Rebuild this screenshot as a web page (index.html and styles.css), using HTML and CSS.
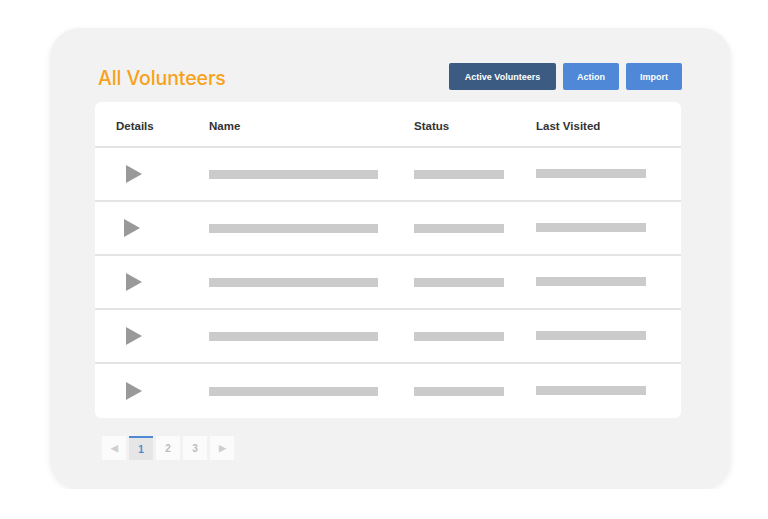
FILE: index.html
```html
<!DOCTYPE html>
<html>
<head>
<meta charset="utf-8">
<link rel="stylesheet" href="styles.css">
</head>
<body>
<div class="card">
  <div class="top">
    <h1 class="title">All Volunteers</h1>
    <div class="buttons">
      <button class="btn btn-dark">Active Volunteers</button>
      <button class="btn btn-blue">Action</button>
      <button class="btn btn-blue">Import</button>
    </div>
  </div>
  <div class="panel">
    <div class="row head">
      <div>Details</div>
      <div>Name</div>
      <div>Status</div>
      <div>Last Visited</div>
    </div>
    <div class="row"><div><span class="tri"></span></div><div><span class="bar bar-name"></span></div><div><span class="bar bar-status"></span></div><div><span class="bar bar-last"></span></div></div>
    <div class="row"><div><span class="tri tri-alt"></span></div><div><span class="bar bar-name"></span></div><div><span class="bar bar-status"></span></div><div><span class="bar bar-last"></span></div></div>
    <div class="row"><div><span class="tri"></span></div><div><span class="bar bar-name"></span></div><div><span class="bar bar-status"></span></div><div><span class="bar bar-last"></span></div></div>
    <div class="row"><div><span class="tri"></span></div><div><span class="bar bar-name"></span></div><div><span class="bar bar-status"></span></div><div><span class="bar bar-last"></span></div></div>
    <div class="row"><div><span class="tri"></span></div><div><span class="bar bar-name"></span></div><div><span class="bar bar-status"></span></div><div><span class="bar bar-last"></span></div></div>
  </div>
  <div class="pager">
    <span class="pg arrow">&#9664;</span>
    <span class="pg active">1</span>
    <span class="pg">2</span>
    <span class="pg">3</span>
    <span class="pg arrow">&#9654;</span>
  </div>
</div>
</body>
</html>
```

FILE: styles.css
```css
html, body {
  margin: 0;
  padding: 0;
  background: #ffffff;
  font-family: "Liberation Sans", Arial, sans-serif;
}

.card {
  box-sizing: border-box;
  width: 681px;
  height: 461px;
  margin: 28px 0 0 50px;
  padding: 35px 0 0 45px;
  background: #f2f2f2;
  border-radius: 30px;
  box-shadow: 0 2px 6px rgba(0, 0, 0, 0.08);
}

.top {
  display: flex;
  align-items: center;
  justify-content: space-between;
  width: 587px;
  height: 27px;
}

.title {
  margin: 2px 0 0 3px;
  font-family: Inter, "Liberation Sans", sans-serif;
  font-size: 19.5px;
  font-weight: 500;
  color: #f7a21b;
  letter-spacing: -0.1px;
}

.buttons {
  display: flex;
  gap: 7px;
}

.btn {
  height: 27px;
  border: none;
  border-radius: 2px;
  color: #ffffff;
  font-family: "Liberation Sans", Arial, sans-serif;
  font-size: 9px;
  font-weight: 700;
  padding: 0;
}

.btn-dark {
  width: 107px;
  background: #3b5b82;
}

.btn-blue {
  width: 56px;
  background: #4e88d6;
}

.panel {
  width: 586px;
  margin-top: 12px;
  background: #ffffff;
  border-radius: 6px;
}

.row {
  display: grid;
  grid-template-columns: 93px 205px 122px 1fr;
  align-items: center;
  box-sizing: border-box;
  height: 54px;
  padding-left: 21px;
  border-bottom: 2px solid #e4e4e4;
}

.row:last-child {
  border-bottom: none;
  height: 54px;
}

.head {
  height: 46px;
  padding-top: 3px;
  font-size: 11.5px;
  font-weight: 700;
  color: #333333;
}

.tri {
  display: block;
  width: 0;
  height: 0;
  margin-left: 10px;
  border-left: 16px solid #999999;
  border-top: 9px solid transparent;
  border-bottom: 9px solid transparent;
}

.tri-alt {
  margin-left: 8px;
}

.bar {
  display: block;
  height: 9px;
  background: #cbcbcb;
}

.bar-name {
  width: 169px;
}

.bar-status {
  width: 90px;
}

.bar-last {
  width: 110px;
  margin-top: -2px;
}

.pager {
  display: flex;
  gap: 3px;
  margin: 18px 0 0 7px;
}

.pg {
  display: flex;
  align-items: center;
  justify-content: center;
  box-sizing: border-box;
  width: 24px;
  height: 24px;
  background: #fbfbfb;
  color: #bdbdbd;
  font-size: 10px;
  font-weight: 700;
}

.pg.arrow {
  font-size: 9px;
  color: #cfcfcf;
}

.pg.active {
  background: #e6e6e6;
  border-top: 2px solid #4e88d6;
  color: #4e88d6;
}
```
